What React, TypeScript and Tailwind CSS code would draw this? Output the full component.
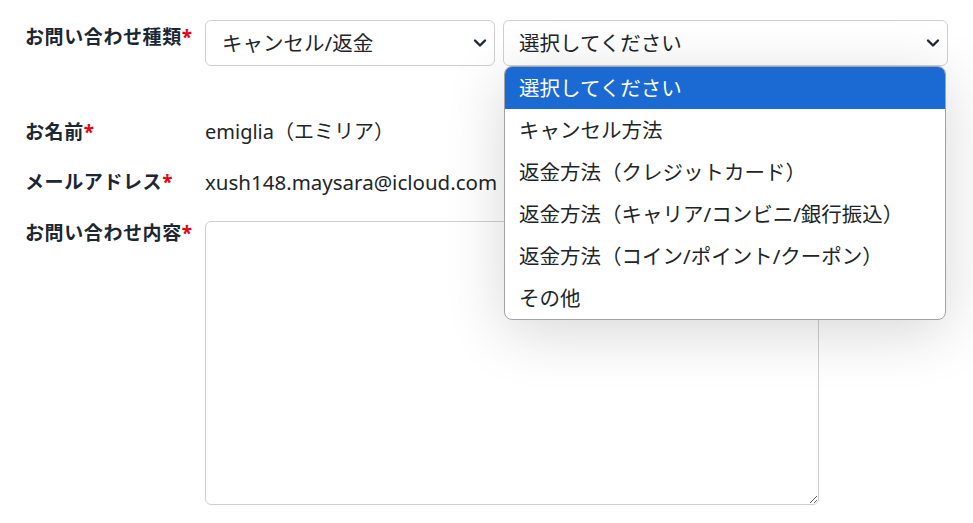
import React from "react";

const font = { fontFamily: '"Noto Sans", "Noto Sans CJK JP", sans-serif' };

function Chevron() {
  return (
    <svg width="14" height="10" viewBox="0 0 14 10" className="shrink-0">
      <polyline points="2,2.5 7,7.5 12,2.5" fill="none" stroke="#1e2a36" strokeWidth="2.4" strokeLinecap="round" strokeLinejoin="round" />
    </svg>
  );
}

function Label({ text }: { text: string }) {
  return (
    <div className="w-[180px] shrink-0 font-bold text-[19px] leading-[30px] text-[#1b2733] tracking-[0.6px]">
      {text}
      <span className="text-[#e60012]">*</span>
    </div>
  );
}

const options = [
  "選択してください",
  "キャンセル方法",
  "返金方法（クレジットカード）",
  "返金方法（キャリア/コンビニ/銀行振込）",
  "返金方法（コイン/ポイント/クーポン）",
  "その他",
];

export default function App() {
  return (
    <div className="relative w-[973px] h-[523px] bg-white overflow-hidden text-[#212529]" style={font}>
      <div className="pt-[20px] pl-[25px] flex flex-col">
        <div className="flex items-start">
          <div className="pt-[2px]">
            <Label text="お問い合わせ種類" />
          </div>
          <div className="flex gap-[8px]">
            <div className="w-[290px] h-[46px] rounded-[6px] border border-[#cdd1d4] flex items-center justify-between pl-[16px] pr-[7px] text-[20.5px]">
              <span>キャンセル/返金</span>
              <Chevron />
            </div>
            <div className="w-[445px] h-[46px] rounded-[6px] border border-[#cdd1d4] flex items-center justify-between pl-[15px] pr-[7px] text-[20.5px]">
              <span>選択してください</span>
              <Chevron />
            </div>
          </div>
        </div>

        <div className="flex items-center mt-[51px] leading-[30px]">
          <Label text="お名前" />
          <div className="text-[20px]">emiglia（エミリア）</div>
        </div>

        <div className="flex items-center mt-[20px] leading-[30px]">
          <Label text="メールアドレス" />
          <div className="text-[20.5px]">xush148.maysara@icloud.com</div>
        </div>

        <div className="flex items-start mt-[21px]">
          <Label text="お問い合わせ内容" />
          <textarea className="mt-[3px] w-[614px] h-[284px] rounded-[6px] border border-[#cfcfcf] bg-white resize" />
        </div>
      </div>

      <div className="absolute left-[504px] top-[66px] w-[442px] rounded-[8px] border border-[#a3a3a3] bg-white overflow-hidden shadow-[0_12px_60px_rgba(0,0,0,0.16)]">
        {options.map((o, i) => (
          <div
            key={o}
            className={
              i === 0
                ? "h-[42px] flex items-center pl-[14px] text-[20.5px] bg-[#1b69d3] text-white"
                : "h-[42px] flex items-center pl-[14px] text-[20.5px] text-[#212529]"
            }
          >
            {o}
          </div>
        ))}
      </div>
    </div>
  );
}
